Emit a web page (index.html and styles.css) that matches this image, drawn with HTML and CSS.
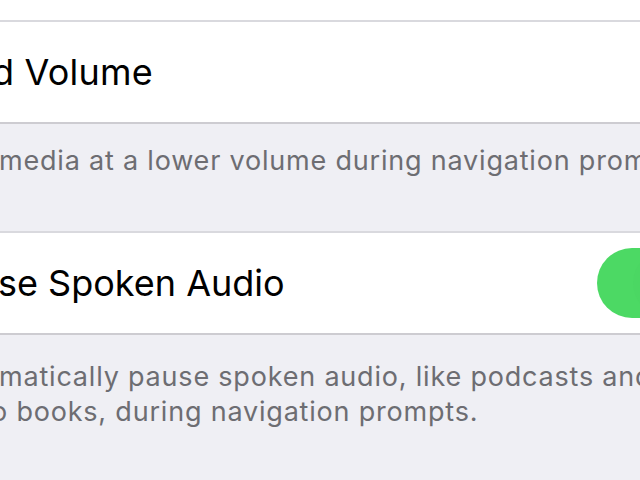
FILE: index.html
```html
<!DOCTYPE html>
<html lang="en">
<head>
  <meta charset="UTF-8">
  <meta name="viewport" content="width=device-width, initial-scale=1.0">
  <title>Navigation Audio</title>
  <link rel="stylesheet" href="styles.css">
</head>
<body>

<div class="settings">
  <div class="cell-top"></div>

  <div class="cell">
    <span class="cell-label cut">d Volume</span>
  </div>
  <div class="note note-first">
    <p>media at a lower volume during navigation prompts.</p>
  </div>

  <div class="cell">
    <span class="cell-label cut-s">se Spoken Audio</span>
    <div class="switch on"><div class="knob"></div></div>
  </div>
  <div class="note">
    <p>matically pause spoken audio, like podcasts and<br><span class="cut-o">o</span> books, during navigation prompts.</p>
  </div>
</div>

</body>
</html>
```

FILE: styles.css
```css
* {
  margin: 0;
  padding: 0;
  box-sizing: border-box;
  font-family: 'Inter', 'Noto Sans', sans-serif;
}

body, html {
  width: 100%;
  height: 100%;
  overflow: hidden;
  background: #efeff4;
}

.settings {
  width: 640px;
  overflow: hidden;
}

.cell-top {
  height: 22px;
  background: #ffffff;
  border-bottom: 2px solid #d9d9de;
}

.cell {
  height: 102px;
  display: flex;
  align-items: center;
  justify-content: space-between;
  background: #ffffff;
  border-bottom: 2px solid #cdccd1;
  white-space: nowrap;
}

.cell-label {
  font-size: 36px;
  color: #000000;
  letter-spacing: 0.2px;
}

.cell-label.cut {
  margin-left: -8px;
}

.cell-label.cut-s {
  letter-spacing: 0;
  margin-left: -2px;
}

.note {
  background: #efeff4;
  color: #6d6d72;
  font-size: 27px;
  line-height: 35px;
  letter-spacing: 0.8px;
  white-space: nowrap;
  padding-top: 24px;
  height: 145px;
}

.note-first {
  height: 109px;
  padding-top: 19px;
  border-bottom: 2px solid #d9d9de;
}

.note p {
  margin-left: -1px;
}

.cut-o {
  margin-left: -8px;
}

/* switch runs off the right edge */
.switch {
  width: 104px;
  height: 70px;
  border-radius: 35px;
  margin-right: -61px;
  background: #4cd964;
  position: relative;
}

.switch .knob {
  position: absolute;
  top: 2px;
  right: 2px;
  width: 66px;
  height: 66px;
  border-radius: 50%;
  background: #4bd763;
}
```
